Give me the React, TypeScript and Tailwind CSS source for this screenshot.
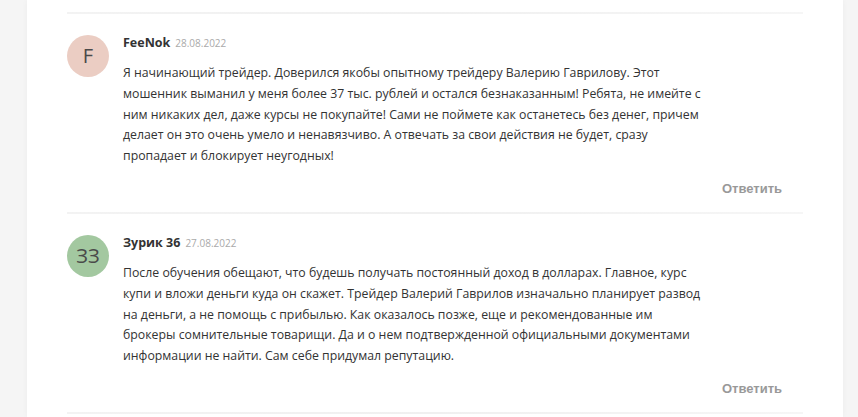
import { FunctionComponent } from "react";

type Comment = {
  initials: string;
  avatarClass: string;
  name: string;
  date: string;
  text: string;
};

const comments: Comment[] = [
  {
    initials: "F",
    avatarClass: "bg-[#ebcdc3]",
    name: "FeeNok",
    date: "28.08.2022",
    text: "Я начинающий трейдер. Доверился якобы опытному трейдеру Валерию Гаврилову. Этот мошенник выманил у меня более 37 тыс. рублей и остался безнаказанным! Ребята, не имейте с ним никаких дел, даже курсы не покупайте! Сами не поймете как останетесь без денег, причем делает он это очень умело и ненавязчиво. А отвечать за свои действия не будет, сразу пропадает и блокирует неугодных!",
  },
  {
    initials: "ЗЗ",
    avatarClass: "bg-[#a3c8a0]",
    name: "Зурик 36",
    date: "27.08.2022",
    text: "После обучения обещают, что будешь получать постоянный доход в долларах. Главное, курс купи и вложи деньги куда он скажет. Трейдер Валерий Гаврилов изначально планирует развод на деньги, а не помощь с прибылью. Как оказалось позже, еще и рекомендованные им брокеры сомнительные товарищи. Да и о нем подтвержденной официальными документами информации не найти. Сам себе придумал репутацию.",
  },
];

const Divider = () => (
  <div className="h-[2px] bg-gradient-to-r from-[#f3f3f3] via-[#f0f0f0] to-[#f6f6f6]" />
);

const CommentItem: FunctionComponent<{ c: Comment }> = ({ c }) => (
  <div>
    <div className="flex pt-[19px] pb-[12px]">
      <div
        className={`${c.avatarClass} mt-[2px] flex h-[42px] w-[42px] shrink-0 items-center justify-center rounded-full text-[20px] text-[#4a4a4a]`}
      >
        {c.initials}
      </div>
      <div className="ml-[14px] w-[582px]">
        <div className="flex items-baseline h-[20px] leading-[20px]">
          <span className="text-[12.5px] font-bold text-[#333]">{c.name}</span>
          <span className="ml-[5px] text-[10px] text-[#aaa]">{c.date}</span>
        </div>
        <p className="mt-[10px] text-[12.3px] leading-[20.8px] text-[#333]">
          {c.text}
        </p>
      </div>
    </div>
    <div className="flex justify-end pr-[21px] pb-[13px]">
      <span className="font-['Liberation_Sans',Arial,sans-serif] text-[13px] font-bold leading-[20px] text-[#999]">
        Ответить
      </span>
    </div>
    <Divider />
  </div>
);

const App: FunctionComponent = () => {
  return (
    <div className="flex h-[417px] w-[858px] overflow-hidden bg-[#f5f5f5] font-['Open_Sans',sans-serif]">
      <div className="ml-[27px] w-[816px] bg-white shadow-[0_0_6px_rgba(0,0,0,0.04)]">
        <div className="mx-[40px] pt-[12px]">
          <Divider />
          {comments.map((c) => (
            <CommentItem key={c.name} c={c} />
          ))}
        </div>
      </div>
    </div>
  );
};

export default App;
